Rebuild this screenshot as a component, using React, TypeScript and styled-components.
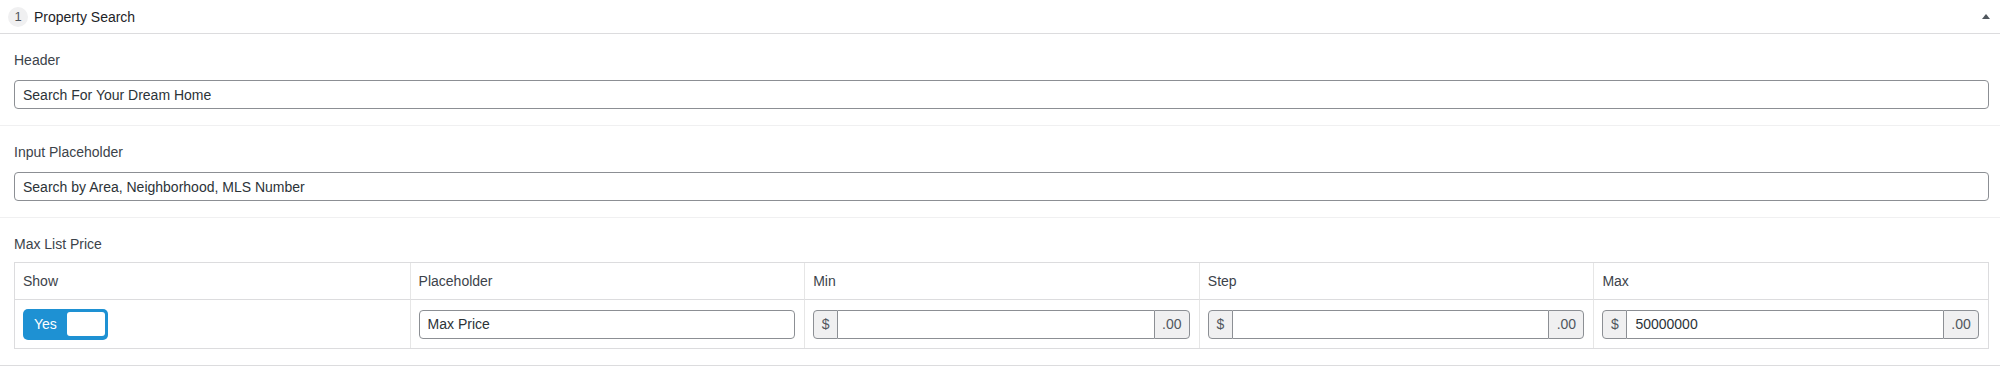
import styled, { createGlobalStyle } from "styled-components"

const GlobalStyle = createGlobalStyle`
  body {
    margin: 0;
    background: #fff;
    font-family: "Liberation Sans", Arial, sans-serif;
    color: #1d2327;
  }
`

const Panel = styled.div`
  width: 2000px;
  background: #fff;
`

// collapsible group title
const GroupHeader = styled.div`
  height: 33px;
  display: flex;
  align-items: center;
  padding: 0 10px 0 8px;
  border-bottom: 1px solid #dcdcde;
`

const Badge = styled.span`
  width: 20px;
  height: 20px;
  border-radius: 50%;
  background: #f0f0f1;
  color: #50575e;
  font-size: 13px;
  display: flex;
  align-items: center;
  justify-content: center;
`

const GroupTitle = styled.span`
  margin-left: 6px;
  font-size: 14px;
  color: #1d2327;
  flex: 1;
`

const Caret = styled.span`
  width: 0;
  height: 0;
  border-left: 4px solid transparent;
  border-right: 4px solid transparent;
  border-bottom: 5px solid #50575e;
`

const Field = styled.div<{ $last?: boolean; $gap?: number }>`
  padding: 16px 11px 16px 14px;
  border-bottom: 1px solid ${(p) => (p.$last ? "#dcdcde" : "#f0f0f1")};
  display: grid;
  row-gap: ${(p) => p.$gap ?? 10}px;
`

const Label = styled.div`
  font-size: 14px;
  line-height: 20px;
  color: #3c434a;
`

const TextInput = styled.div<{ $flat?: boolean }>`
  height: 29px;
  box-sizing: border-box;
  border: 1px solid #8c8f94;
  border-radius: ${(p) => (p.$flat ? "0" : "4px")};
  background: #fff;
  display: flex;
  align-items: center;
  padding: 0 8px;
  font-size: 14px;
  color: #2c3338;
  flex: 1 1 auto;
  min-width: 0;
  width: 100%;
`

const Table = styled.div`
  display: grid;
  grid-template-columns: repeat(5, 1fr);
  border: 1px solid #dcdcde;
`

const HeadCell = styled.div<{ $first?: boolean }>`
  height: 36px;
  display: flex;
  align-items: center;
  padding: 0 8px;
  font-size: 14px;
  color: #3c434a;
  border-left: ${(p) => (p.$first ? "none" : "1px solid #e6e6e6")};
  border-bottom: 1px solid #dcdcde;
`

const BodyCell = styled.div<{ $first?: boolean }>`
  height: 48px;
  box-sizing: border-box;
  display: flex;
  align-items: center;
  padding: 0 9px 0 8px;
  border-left: ${(p) => (p.$first ? "none" : "1px solid #e6e6e6")};
`

const Toggle = styled.div`
  width: 85px;
  height: 31px;
  box-sizing: border-box;
  border-radius: 5px;
  background: #1e91d3;
  display: flex;
  align-items: center;
  justify-content: space-between;
  padding: 0 3px 0 11px;
  flex-shrink: 0;
`

const ToggleText = styled.span`
  color: #fff;
  font-size: 14px;
`

const Knob = styled.span`
  width: 38px;
  height: 24px;
  border-radius: 3px;
  background: #fff;
`

const Group = styled.div`
  display: flex;
  width: 100%;
  height: 29px;
`

const Addon = styled.div<{ $side: "left" | "right"; $w: number }>`
  width: ${(p) => p.$w}px;
  box-sizing: border-box;
  background: #f0f0f1;
  border: 1px solid #8c8f94;
  border-radius: ${(p) => (p.$side === "left" ? "4px 0 0 4px" : "0 4px 4px 0")};
  display: flex;
  align-items: center;
  justify-content: center;
  font-size: 14px;
  color: #50575e;
  flex-shrink: 0;
`

const GroupInput = styled(TextInput)`
  border-left: none;
  border-right: none;
`

function MoneyInput({ value }: { value?: string }) {
  return (
    <Group>
      <Addon $side="left" $w={25}>$</Addon>
      <GroupInput $flat>{value}</GroupInput>
      <Addon $side="right" $w={36}>.00</Addon>
    </Group>
  )
}

export default function App() {
  return (
    <>
      <GlobalStyle />
      <Panel>
        <GroupHeader>
          <Badge>1</Badge>
          <GroupTitle>Property Search</GroupTitle>
          <Caret />
        </GroupHeader>

        <Field>
          <Label>Header</Label>
          <TextInput>Search For Your Dream Home</TextInput>
        </Field>

        <Field>
          <Label>Input Placeholder</Label>
          <TextInput>Search by Area, Neighborhood, MLS Number</TextInput>
        </Field>

        <Field $last $gap={8}>
          <Label>Max List Price</Label>
          <Table>
            <HeadCell $first>Show</HeadCell>
            <HeadCell>Placeholder</HeadCell>
            <HeadCell>Min</HeadCell>
            <HeadCell>Step</HeadCell>
            <HeadCell>Max</HeadCell>

            <BodyCell $first>
              <Toggle>
                <ToggleText>Yes</ToggleText>
                <Knob />
              </Toggle>
            </BodyCell>
            <BodyCell>
              <TextInput>Max Price</TextInput>
            </BodyCell>
            <BodyCell>
              <MoneyInput />
            </BodyCell>
            <BodyCell>
              <MoneyInput />
            </BodyCell>
            <BodyCell>
              <MoneyInput value="50000000" />
            </BodyCell>
          </Table>
        </Field>
      </Panel>
    </>
  )
}
